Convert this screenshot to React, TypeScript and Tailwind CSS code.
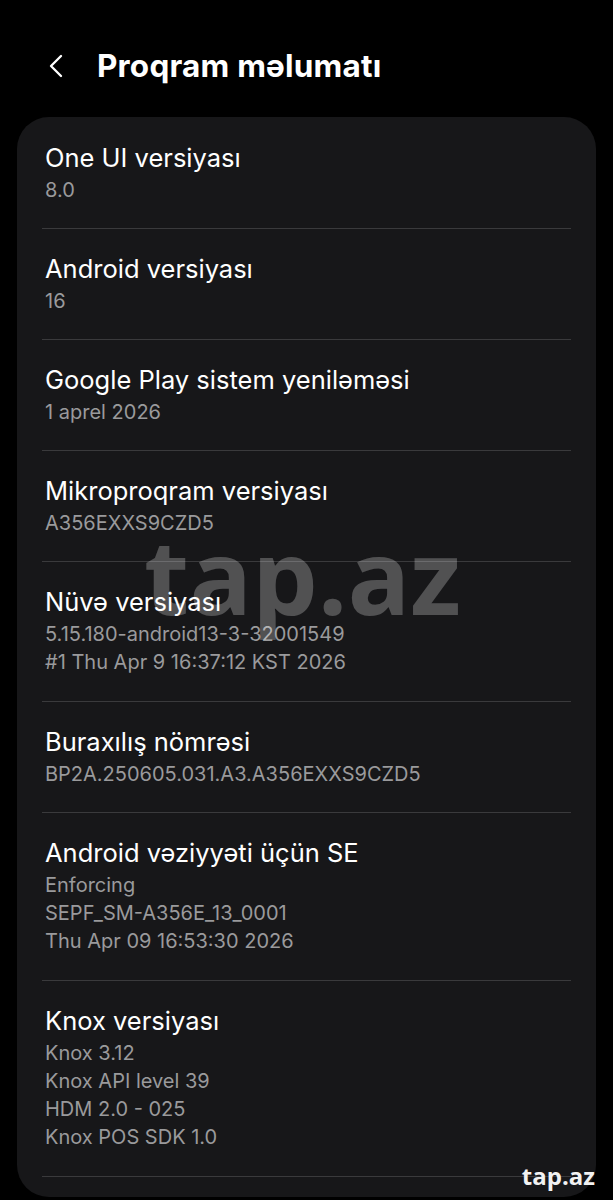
import { ChevronLeft } from "lucide-react";

type Item = { title: string; lines: string[] };

const items: Item[] = [
  { title: "One UI versiyası", lines: ["8.0"] },
  { title: "Android versiyası", lines: ["16"] },
  { title: "Google Play sistem yeniləməsi", lines: ["1 aprel 2026"] },
  { title: "Mikroproqram versiyası", lines: ["A356EXXS9CZD5"] },
  {
    title: "Nüvə versiyası",
    lines: ["5.15.180-android13-3-32001549", "#1 Thu Apr 9 16:37:12 KST 2026"],
  },
  { title: "Buraxılış nömrəsi", lines: ["BP2A.250605.031.A3.A356EXXS9CZD5"] },
  {
    title: "Android vəziyyəti üçün SE",
    lines: ["Enforcing", "SEPF_SM-A356E_13_0001", "Thu Apr 09 16:53:30 2026"],
  },
  {
    title: "Knox versiyası",
    lines: ["Knox 3.12", "Knox API level 39", "HDM 2.0 - 025", "Knox POS SDK 1.0"],
  },
];

export default function App() {
  return (
    <div className="relative h-[1200px] overflow-hidden bg-black font-['Inter','Roboto',sans-serif] text-white">
      <header className="flex h-[117px] items-start pt-[46px]">
        <ChevronLeft className="ml-[36px] h-[40px] w-[40px] text-white" strokeWidth={1.4} />
        <h1 className="ml-[21px] text-[31.5px] font-bold leading-[40px] tracking-[0.2px]">
          Proqram məlumatı
        </h1>
      </header>

      <div className="mx-[17px] rounded-[32px] bg-[#171719] px-[25px] pt-[1px]">
        {items.map((item) => (
          <div
            key={item.title}
            className={
              item.lines.length > 1
                ? "border-b border-[#3a3a3c] pb-[25px] pt-[24px]"
                : "border-b border-[#3a3a3c] pb-[24px] pt-[24px]"
            }
          >
            <div className="pl-[3px] text-[25.5px] leading-[32px]">{item.title}</div>
            <div className="mt-[2px] pl-[3px] text-[20px] leading-[28px] text-[#9a9a9c]">
              {item.lines.map((l) => (
                <div key={l}>{l}</div>
              ))}
            </div>
          </div>
        ))}
        <div className="h-[20px]" />
      </div>

      <div className="pointer-events-none absolute left-[144px] top-[505px] font-['Open_Sans',sans-serif] text-[104px] font-bold leading-[140px] text-white/25">
        tap.az
      </div>
      <div className="pointer-events-none absolute right-[18px] top-[1160px] font-['Open_Sans',sans-serif] text-[24px] font-bold leading-[32px] text-[#f2f2f2]">
        tap.az
      </div>
    </div>
  );
}
